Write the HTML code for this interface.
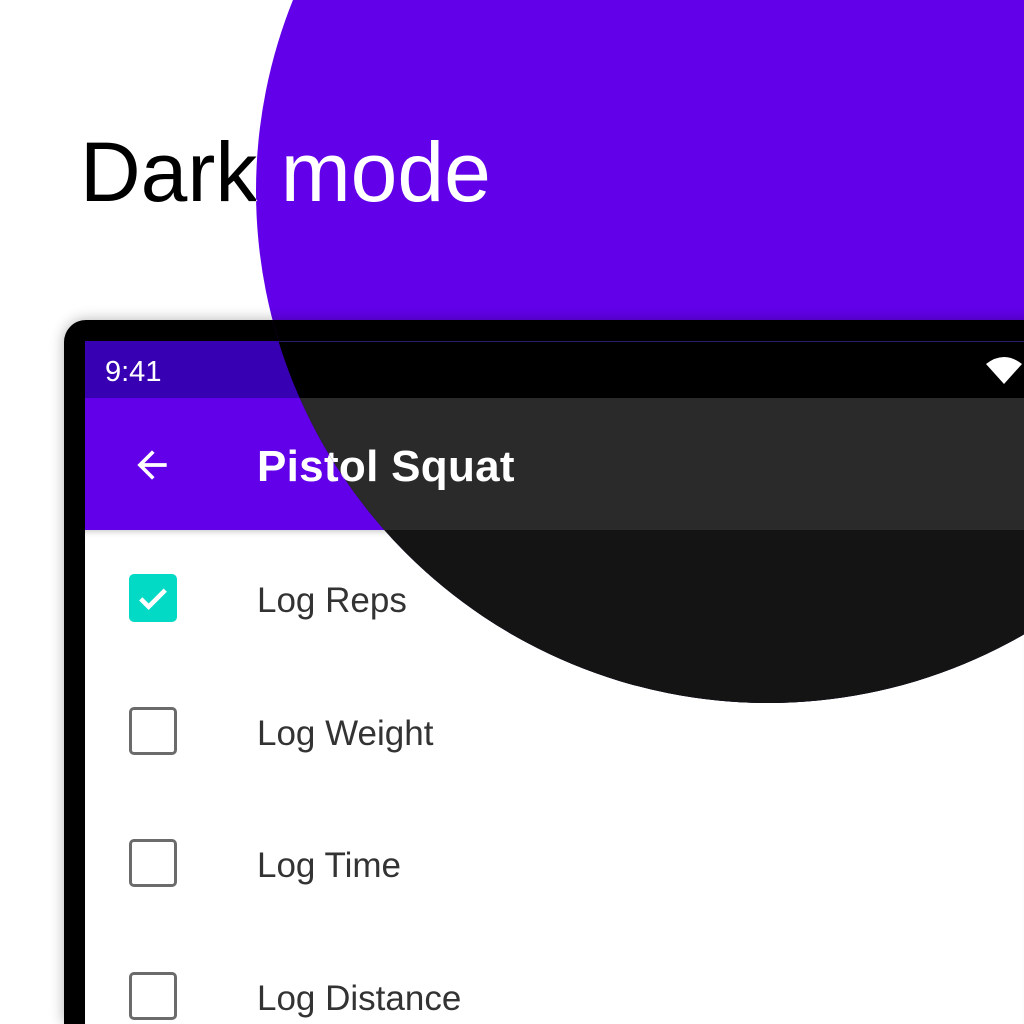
<!DOCTYPE html><html><head><style>
html,body{margin:0;width:1024px;height:1024px;overflow:hidden;font-family:"Liberation Sans",sans-serif;}
.layer{position:absolute;left:0;top:0;width:1024px;height:1024px;overflow:hidden;}
.l1{background:#fff;}
.l2{background:#6200EA;clip-path:circle(512px at 768px 191px);}
.title{position:absolute;left:80px;top:122px;font-size:84px;line-height:100px;}
.frame{position:absolute;left:64px;top:320px;width:1000px;height:704px;background:#000;border-radius:22px 22px 0 0;box-shadow:0 0 14px rgba(0,0,0,.3);}
.scr{position:absolute;left:85px;top:341px;width:939px;height:683px;overflow:hidden;}
.sb{position:absolute;left:0;top:0;width:100%;height:57px;}
.ab{position:absolute;left:0;top:57px;width:100%;height:132px;}
.body{position:absolute;left:0;top:189px;width:100%;height:600px;}
.time{position:absolute;left:20px;top:15px;font-size:29px;color:#fff;}
.arrow{position:absolute;left:45px;top:45px;}
.at{position:absolute;left:172px;top:44px;font-size:44px;font-weight:bold;color:#fff;letter-spacing:0.3px;}
.row{position:absolute;left:0;width:100%;height:60px;}
.cb{position:absolute;left:44px;top:1px;width:42px;height:42px;border:3px solid #6b6b6b;border-radius:5px;}
.cb.on{background:#03DAC5;border-color:#03DAC5;}
.lt{position:absolute;left:172px;top:8px;font-size:35px;}
</style></head><body>
<div class="layer l1">
<div class="title" style="color:#000">Dark mode</div>
<div class="frame"></div>
<div class="scr">
<div class="sb" style="background:#3700B3"><div class="time">9:41</div></div>
<div class="ab" style="background:#6200EA"><svg class="arrow" width="44" height="44" viewBox="0 0 24 24"><path d="M20 11H7.83l5.59-5.59L12 4l-8 8 8 8 1.41-1.41L7.83 13H20v-2z" fill="#fff"/></svg><div class="at">Pistol Squat</div></div>
<div class="body" style="background:#fff;box-shadow:inset 0 6px 6px -4px rgba(0,0,0,.2)">
<div class="row" style="top:43px"><div class="cb on"><svg width="42" height="42" viewBox="0 0 24 24"><path d="M5 12.5l4.5 4.5L19 7.5" stroke="#fff" stroke-width="2.6" fill="none"/></svg></div><div class="lt" style="color:#333">Log Reps</div></div>
<div class="row" style="top:176px"><div class="cb"></div><div class="lt" style="color:#333">Log Weight</div></div>
<div class="row" style="top:308px"><div class="cb"></div><div class="lt" style="color:#333">Log Time</div></div>
<div class="row" style="top:441px"><div class="cb"></div><div class="lt" style="color:#333">Log Distance</div></div>
</div></div></div>
<div class="layer l2">
<div class="title" style="color:#fff">Dark mode</div>
<div class="frame"></div>
<div class="scr">
<div class="sb" style="background:#000;border-top:1px solid #2a1a6a"><div class="time">9:41</div>
<svg style="position:absolute;left:900px;top:12px" width="38" height="32" viewBox="0 0 38 32"><path d="M1 10 Q19 -4 37 10 L19 30 Z" fill="#fff"/></svg></div>
<div class="ab" style="background:#2a2a2a"><svg class="arrow" width="44" height="44" viewBox="0 0 24 24"><path d="M20 11H7.83l5.59-5.59L12 4l-8 8 8 8 1.41-1.41L7.83 13H20v-2z" fill="#fff"/></svg><div class="at">Pistol Squat</div></div>
<div class="body" style="background:#141414">
<div class="row" style="top:43px"><div class="lt" style="color:#ddd">Log Reps</div></div>
</div></div></div>
</body></html>
